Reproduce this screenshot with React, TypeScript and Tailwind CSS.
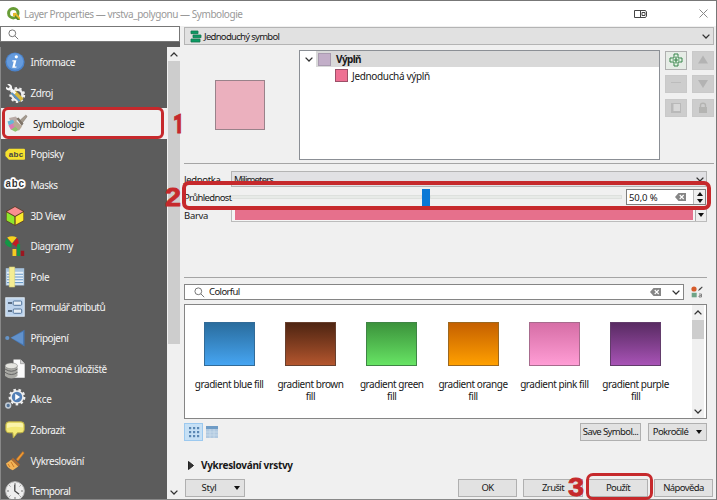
import React from 'react';

type P = { children?: React.ReactNode; className?: string };

const Txt = ({ children, className = '' }: P) => (
  <span className={'whitespace-nowrap leading-none ' + className}>{children}</span>
);

const Chevron = ({ className = '' }: P) => (
  <svg className={'h-[5px] w-[8px] shrink-0 ' + className} viewBox="0 0 8 5" fill="none" stroke="#333" strokeWidth="1.3">
    <path d="M.6.6 4 4 7.4.6" />
  </svg>
);

const Triangle = ({ className = '' }: P) => (
  <svg className={'h-[4px] w-[6px] shrink-0 ' + className} viewBox="0 0 6 4">
    <path d="M0 0h6L3 4z" fill="#111" />
  </svg>
);

const Search = ({ className = '' }: P) => (
  <svg className={'h-[11px] w-[11px] shrink-0 ' + className} viewBox="0 0 11 11" fill="none" stroke="#777" strokeWidth="1">
    <circle cx="4.3" cy="4.3" r="3.4" />
    <path d="m6.8 6.8 3.4 3.4" />
  </svg>
);

const Clear = ({ className = '' }: P) => (
  <svg className={'h-[8px] w-[11px] shrink-0 ' + className} viewBox="0 0 11 8">
    <path d="M3.5 0H11v8H3.5L0 4z" fill="#868686" />
    <path d="m4.7 2 4 4m0-4-4 4" stroke="#fff" strokeWidth="1.1" />
  </svg>
);

const gear = (cx: number, cy: number, r: number, w: number, color: string) => (
  <circle cx={cx} cy={cy} r={r} fill="none" stroke={color} strokeWidth={w} strokeDasharray={`${(r * Math.PI) / 9} ${(r * Math.PI) / 9}`} />
);

const icons: Record<string, React.ReactNode> = {
  info: (
    <>
      <circle cx="10" cy="10" r="9.6" fill="#4b83cb" />
      <circle cx="10" cy="9.5" r="8.3" fill="#659bdd" />
      <circle cx="11.3" cy="4.8" r="1.6" fill="#fff" />
      <path d="M7.4 8.3h4l-1.6 6.1h1.8l-.3 1.3H7.2l1.5-6.1H7.2z" fill="#fff" />
    </>
  ),
  source: (
    <>
      {gear(12.3, 12, 6.3, 3.2, '#eee')}
      <circle cx="12.3" cy="12" r="5.2" fill="none" stroke="#eee" strokeWidth="2.6" />
      <path d="m5.5 10.5 5-3 8 8-4 3.7z" fill="#d8b93b" />
      <path d="m5.5 10.5 2-1.3 8 8.4-1.5 1.3z" fill="#5a91c5" />
      <path d="M2.2 1.3C4.4.3 7.8 2 7 5.3l4.3 4.3-1.8 1.7-4.4-4C2.2 8.2.2 5.7 1.2 3.8l2.2 1.5 1.6-1.5z" fill="#f5f5f5" />
    </>
  ),
  labels: (
    <>
      <path d="M4 4.7h15a1 1 0 0 1 1 1v9a1 1 0 0 1-1 1H4L.4 12V8z" fill="#f6e12e" />
      <text x="3.8" y="12.8" fontSize="8" fontWeight="bold" fontFamily="Liberation Sans" fill="#444" textLength="14.5">abc</text>
    </>
  ),
  masks: (
    <text x="0.6" y="12.4" fontSize="10" fontWeight="bold" fontFamily="Liberation Sans" fill="#333" stroke="#fff" strokeWidth="3.6" strokeLinejoin="round" paintOrder="stroke" textLength="18.5">abc</text>
  ),
  cube: (
    <>
      <path d="m10 .3 9 5v9.8l-9 4.7-9-4.7V5.3z" fill="#5c3a22" />
      <path d="m10 1 8 4.4-8 4.5-8-4.5z" fill="#fa8e91" />
      <path d="m1.6 6.2 7.8 4.5v8L1.6 14.6z" fill="#8de82c" />
      <path d="m18.4 6.2-7.8 4.5v8l7.8-4.1z" fill="#faea2c" />
    </>
  ),
  diagrams: (
    <>
      <path d="M2.2 1.6Q7-1 11.8 1.6L7 7.3z" fill="#f8d21c" />
      <path d="M12 2.1Q15 5 12.2 11L7.2 8z" fill="#c51c20" />
      <path d="M1.4 2.3-.2 6.8Q2 11.4 6.7 11.5L6.4 7.5z" fill="#139745" />
      <path d="M7.5 13h3.8v7H7.5z" fill="#f6ca21" />
      <path d="M12 8.2h3.1V20H12z" fill="#159348" />
      <path d="M15.8 14.7h3.4V20h-3.4z" fill="#9b1620" />
    </>
  ),
  fields: (
    <>
      <path d="M.8 1.2h18.4v17.3H.8z" fill="#a8c5e0" />
      <path d="M1.8 4.8h16.4v12.8H1.8z" fill="#e8f1f8" />
      <path d="M2 7.2h16M2 10h16M2 12.8h16M2 15.6h16" stroke="#6798c7" strokeWidth="1.1" />
      <path d="M4.3 0h5.4v20H4.3z" fill="#f5ed92" stroke="#d4cf78" strokeWidth=".6" />
    </>
  ),
  form: (
    <>
      <rect x=".8" y=".8" width="18.4" height="18.4" fill="#bdd3ec" stroke="#e2edf8" />
      <rect x="8.2" y="4" width="8.5" height="4.3" rx="1" fill="#e5edf5" stroke="#52749b" />
      <rect x="8.2" y="12" width="8.5" height="4.3" rx="1" fill="#e5edf5" stroke="#52749b" />
      <path d="M3 6h4M3 14h4" stroke="#374a5d" strokeWidth="1.4" />
    </>
  ),
  joins: (
    <>
      <circle cx="2.3" cy="10" r="2.1" fill="#6694c7" />
      <path d="m5.5 9.7 14-8v16.7z" fill="#4778b5" />
      <path d="m6 9.7 12-6v12.6z" fill="#6292cc" />
    </>
  ),
  storage: (
    <>
      <path d="M8.5.5h7l4.2 4.2v14.1H8.5z" fill="#fafafa" />
      <path d="M15.5.5v4.2h4.2" fill="#d2d2d2" stroke="#777" strokeWidth=".5" />
      <path d="M0 6.8v10.1q6.5 5 12.5 0V6.8z" fill="#a9a9a4" />
      <ellipse cx="6.3" cy="6.8" rx="6.2" ry="2.9" fill="#e4e4df" stroke="#777" strokeWidth=".5" />
      <path d="M0 10q6.3 4.5 12.5 0M0 13.3q6.3 4.5 12.5 0" fill="none" stroke="#666" />
    </>
  ),
  actions: (
    <>
      {gear(12, 8, 7.2, 2.4, '#eee')}
      <circle cx="12" cy="8" r="6.8" fill="#eee" />
      <circle cx="12" cy="8" r="5.2" fill="#527fb6" />
      <path d="m10.2 4.8 4.9 3.2-4.9 3.2z" fill="#fff" />
      <circle cx="3.2" cy="16.5" r="2.4" fill="#527295" stroke="#c2cbd5" strokeWidth="1.5" />
    </>
  ),
  display: (
    <>
      <path d="M4 1.8h12q3.2 0 3.2 3v5q0 3-3.2 3h-3.6L8.3 18l-.5-5.2H4q-3.2 0-3.2-3v-5q0-3 3.2-3z" fill="#f3e976" stroke="#b9ad45" />
      <path d="M4 3h12q2 0 2 2v2.5Q9 6 2 8V5q0-2 2-2z" fill="#faf4a9" />
    </>
  ),
  rendering: (
    <>
      <path d="m11.3 8.2 6.5-7.6 1.4 1.3-6.2 8z" fill="#f09b35" stroke="#bd6d1f" strokeWidth=".6" />
      <path d="m8 6.7 7 7-1.8 1.8-7-6.7z" fill="#ad6930" />
      <path d="M6.2 8.8 1 12.6q1 4.5 6.8 6.7l5.4-3.8z" fill="#f4b355" />
      <path d="m3 13 2 3m1-5 3 5" stroke="#ca7928" />
    </>
  ),
  temporal: (
    <>
      <circle cx="10" cy="10" r="9.3" fill="#eee" stroke="#c2c2c2" />
      <path d="M10 2v2m0 12v2M2 10h2m12 0h2M4.4 4.4l1 1m9.2 9.2 1 1m0-11.2-1 1m-9.2 9.2-1 1" stroke="#777" />
      <path d="M9.8 3.8V10l4.3 3.2" fill="none" stroke="#444" strokeWidth="1.3" />
    </>
  ),
  brush: (
    <>
      <path d="m2 4 7-1.5L11 6 4 9z" fill="#b9aaa6" />
      <path d="m.5 7.5 5-1.8 2.7 3L2 12z" fill="#67b7d6" />
      <path d="m1.5 11.5 6-2.8 2.3 3.6L4 16z" fill="#de77b4" />
      <path d="m4 15.5 5.5-3.7 3 3.6-4.2 2.4z" fill="#90c26e" />
      <path d="m8 5.7 7 6.7-3.2 4.4q-2-3.2-6-5.8z" fill="#b9a894" />
      <path d="m9.5 4.5 2-1 5 6-1.8 2.6z" fill="#7f7468" />
      <path d="m13.2 6.2 5.5-5q1.3.3 1.2 1.6l-4.5 6z" fill="#a59b8f" stroke="#70675d" strokeWidth=".5" />
    </>
  ),
};

const items: [string, string, string][] = [
  ['info', 'Informace', 'tracking-[-0.45px]'],
  ['source', 'Zdroj', 'tracking-[-0.4px]'],
  ['brush', 'Symbologie', 'tracking-[-0.4px]'],
  ['labels', 'Popisky', 'tracking-[-0.4px]'],
  ['masks', 'Masks', 'tracking-[-0.5px]'],
  ['cube', '3D View', 'tracking-[-0.4px]'],
  ['diagrams', 'Diagramy', 'tracking-[-0.4px]'],
  ['fields', 'Pole', 'tracking-[-0.4px]'],
  ['form', 'Formulář atributů', 'tracking-[-0.55px]'],
  ['joins', 'Připojení', 'tracking-[-0.45px]'],
  ['storage', 'Pomocné úložiště', 'tracking-[-0.4px]'],
  ['actions', 'Akce', 'tracking-[-0.3px]'],
  ['display', 'Zobrazit', 'tracking-[-0.5px]'],
  ['rendering', 'Vykreslování', 'tracking-[-0.45px]'],
  ['temporal', 'Temporal', 'tracking-[-0.55px]'],
];

const Sidebar = () => (
  <aside className="flex w-[180px] shrink-0 flex-col">
    <div className="flex h-[16px] shrink-0 items-center border border-[#777] bg-white pl-[7px]">
      <Search />
    </div>
    <div className="flex min-h-0 flex-1 bg-[#5c5c5c] pt-[5px]">
      <nav className="w-[167px] overflow-hidden border-l border-[#888]">
        {items.map(([icon, label, track]) => {
          const on = icon === 'brush';
          return (
            <div key={icon} className={'flex h-[30.65px] items-center ' + (on ? 'bg-[#f0f0f0] pl-[6px] text-[#222]' : 'pl-[3.5px] text-[#f4f4f4]')}>
              <svg className="h-[20px] w-[20px] shrink-0 overflow-visible" viewBox="0 0 20 20">{icons[icon]}</svg>
              <Txt className={'ml-[6px] ' + track}>{label}</Txt>
            </div>
          );
        })}
      </nav>
      <div className="flex w-[13px] flex-col items-center bg-[#f0f0f0]">
        <div className="flex h-[14px] shrink-0 items-center"><Chevron className="rotate-180" /></div>
        <div className="h-[283px] w-[12px] shrink-0 bg-[#cdcdcd]" />
        <div className="flex flex-1 items-end pb-[4px]"><Chevron /></div>
      </div>
    </div>
  </aside>
);

const fills = [
  ['gradient blue fill', 'from-[#2a6d9e] to-[#46a5f2] border-[#326b98]'],
  ['gradient brown fill', 'from-[#4f2512] to-[#b4562e] border-[#68402e]'],
  ['gradient green fill', 'from-[#3c933c] to-[#67e464] border-[#3f8545]'],
  ['gradient orange fill', 'from-[#c56000] to-[#ffa000] border-[#9c681f]'],
  ['gradient pink fill', 'from-[#d66ea6] to-[#ff9dd5] border-[#a76b8d]'],
  ['gradient purple fill', 'from-[#592b63] to-[#a853b6] border-[#623c6b]'],
];

const Button = ({ children, className = '' }: P) => (
  <div className={'flex h-[18px] shrink-0 items-center justify-center border border-[#b0b0b0] bg-[#e2e2e2] text-[9.5px] tracking-[-0.6px] ' + className}>{children}</div>
);

const ToolIcon = ({ children, className = 'border-[#c9c9c9] bg-[#cdcdcd]' }: P) => (
  <div className={'flex h-[18.5px] w-[22px] items-center justify-center border ' + className}>
    <svg className="h-[14px] w-[14px]" viewBox="0 0 14 14">{children}</svg>
  </div>
);

const SymbolTree = () => (
  <div className="ml-[34px] h-[110px] w-[361px] border border-[#8b8f95] bg-white">
    <div className="flex h-[16px] items-center pl-[5px]">
      <Chevron />
      <div className="ml-[3px] flex h-full flex-1 items-center bg-[#d9d9d9] pl-[2px]">
        <div className="h-[13px] w-[13px] border border-[#a99bb0] bg-[#c2aec8]" />
        <Txt className="ml-[5px] font-bold tracking-[-0.6px]">Výplň</Txt>
      </div>
    </div>
    <div className="flex h-[17px] items-center pl-[35px]">
      <div className="h-[13px] w-[13px] border border-[#9c5068] bg-[#ee7093]" />
      <Txt className="ml-[4px] tracking-[-0.35px]">Jednoduchá výplň</Txt>
    </div>
  </div>
);

const Main = () => (
  <main className="ml-[4px] flex w-[530px] shrink-0 flex-col">
    <div className="mt-px flex h-[18px] shrink-0 items-center border border-[#b4b4b4] bg-[#e1e1e1] pr-[3px]">
      <svg className="ml-[5px] h-[13px] w-[12px]" viewBox="0 0 12 13">
        <path d="M1 1h7v2.7H1zM3 5h8v2.7H3zM1 9h9v3H1z" fill="#0a9b63" stroke="#14734e" strokeWidth=".8" />
      </svg>
      <Txt className="ml-[2px] flex-1 pt-px text-[9.5px] tracking-[-0.7px]">Jednoduchý symbol</Txt>
      <Chevron />
    </div>

    <div className="flex h-[119px] shrink-0 border-b border-[#a5a5a5] pt-[5px]">
      <div className="ml-[31px] mt-[30px] h-[50px] w-[50px] border border-[#99828a] bg-[#ebb0be]" />
      <SymbolTree />
      <div className="ml-[5px] mt-px grid h-[66px] grid-cols-[22px_22px] content-between gap-x-[5px]">
        <ToolIcon className="border-[#b0b0b0] bg-[#e6ece6]">
          <path d="M5 1h4v4h4v4H9v4H5V9H1V5h4z" fill="#e5f3e5" stroke="#37834a" />
          <path d="M7 3.5v7M3.5 7h7" stroke="#37834a" strokeWidth="1.2" />
        </ToolIcon>
        <ToolIcon><path d="m7 2.5 5 8H2z" fill="#b3b3b3" /></ToolIcon>
        <ToolIcon><path d="M2 5.5h10" stroke="#bcbcbc" /></ToolIcon>
        <ToolIcon><path d="m7 11 5-8H2z" fill="#b3b3b3" /></ToolIcon>
        <ToolIcon>
          <path d="M2 2h10v10H2z" fill="#b9b9b9" />
          <path d="M4.5 3H11v7H4.5z" fill="#d8d8d8" />
        </ToolIcon>
        <ToolIcon>
          <path d="M3 6h8v6H3z" fill="#b4b4b2" />
          <path d="M4.5 6V4.3q0-2 2.5-2t2.5 2V6" fill="none" stroke="#b4b4b2" strokeWidth="1.4" />
        </ToolIcon>
      </div>
    </div>

    <section className="flex h-[114px] w-[523px] shrink-0 flex-col border-b border-[#a5a5a5] pt-[7px] text-[9.5px]">
      <div className="flex h-[16px] shrink-0 items-center">
        <Txt className="w-[47px] pt-px tracking-[-0.35px]">Jednotka</Txt>
        <div className="flex h-[16px] flex-1 items-center justify-between border border-[#b4b4b4] bg-[#e1e1e4] pl-[2px] pr-[2px]">
          <Txt className="pt-px tracking-[-0.85px]">Milimeters</Txt>
          <Chevron />
        </div>
      </div>
      <div className="flex h-[20px] shrink-0 items-center">
        <Txt className="w-[47px] pt-px tracking-[-0.65px]">Průhlednost</Txt>
        <div className="flex h-[18px] w-[391px] items-center">
          <div className="h-[4px] w-[191px] border border-[#dde0dd] bg-[#e7eae7]" />
          <div className="h-[17px] w-[8px] bg-[#0a78d6]" />
          <div className="h-[4px] flex-1 border border-[#dde0dd] bg-[#e7eae7]" />
        </div>
        <div className="ml-[4px] flex h-[16px] w-[80px] items-center border border-[#7f7f7f] bg-white pl-[2px]">
          <Txt className="flex-1 pt-px tracking-[-0.1px]">50,0 %</Txt>
          <Clear className="mr-[7px]" />
          <div className="flex h-full w-[12px] flex-col items-center justify-center gap-[3px] border-l border-[#bbb] bg-[#efefef]">
            <Triangle className="rotate-180" />
            <Triangle />
          </div>
        </div>
      </div>
      <div className="flex h-[15px] shrink-0 items-center">
        <Txt className="w-[47px] pt-[2px] tracking-[-0.3px]">Barva</Txt>
        <div className="flex h-[15px] flex-1 border border-[#bcbcbc] bg-[#f5f5f5] pl-[3px]">
          <div className="h-[12px] w-[458px] bg-[#e6708c]" />
          <div className="ml-[2px] flex flex-1 items-center justify-center border-l border-[#aaa] bg-[#eee]"><Triangle /></div>
        </div>
      </div>
    </section>

    <div className="mt-[6px] flex h-[16px] shrink-0 items-center">
      <div className="flex h-[16px] w-[500px] items-center border border-[#858585] bg-white pl-[9px] pr-[3px]">
        <Search />
        <Txt className="ml-[4px] flex-1 text-[9.5px] tracking-[-0.6px]">Colorful</Txt>
        <Clear className="mr-[11px]" />
        <Chevron />
      </div>
      <svg className="ml-[7px] h-[12px] w-[12px]" viewBox="0 0 12 12">
        <circle cx="3" cy="3" r="2.6" fill="#d65c2b" />
        <path d="m7 5 1-2 3-2.5.7.7L9 4z" fill="#444" />
        <path d="M.7 6.8h5v4.5h-5z" fill="#6fa487" />
        <path d="M8 8h2.5v3H8q-1-1.5 2-1.5" fill="none" stroke="#777" strokeWidth=".9" />
      </svg>
    </div>

    <div className="mt-[4px] flex h-[115px] w-[523px] shrink-0 border border-[#858585] bg-white">
      <div className="flex flex-1 pl-[3.5px] pt-[17px]">
        {fills.map(([name, colors]) => (
          <div key={name} className="flex w-[81.3px] shrink-0 flex-col items-center">
            <div className={'h-[44px] w-[51px] border bg-linear-to-b ' + colors} />
            <p className="mt-[12px] w-[74px] text-center text-[10px] leading-[12px] tracking-[-0.45px]">{name}</p>
          </div>
        ))}
      </div>
      <div className="mr-[2px] flex w-[12px] shrink-0 flex-col items-center bg-[#f0f0f0]">
        <div className="flex h-[15px] items-center"><Chevron className="rotate-180" /></div>
        <div className="h-[19px] w-[12px] bg-[#cdcdcd]" />
        <div className="flex flex-1 items-end pb-[4px]"><Chevron /></div>
      </div>
    </div>

    <div className="mt-[4px] flex h-[18px] w-[523px] shrink-0 items-center">
      <div className="flex h-[18px] w-[19px] items-center justify-center border border-[#9cc9ef] bg-[#c6e0f5]">
        <svg className="h-[12px] w-[12px]" viewBox="0 0 12 12" fill="#5a87b3">
          {[1, 5, 9].flatMap((y) => [1, 5, 9].map((x) => <rect key={`${x}-${y}`} x={x} y={y} width="2.2" height="2.2" />))}
        </svg>
      </div>
      <svg className="ml-[3px] h-[12px] w-[12px]" viewBox="0 0 12 12">
        <path d="M0 0h12v12H0z" fill="#b1c9e0" />
        <path d="M0 0h12v3H0z" fill="#6f9cc6" />
        <path d="M4 3v9M8 3v9M0 6h12M0 9h12" stroke="#d0dfed" strokeWidth=".7" />
      </svg>
      <Button className="ml-auto w-[61px]"><Txt>Save Symbol...</Txt></Button>
      <Button className="ml-[7px] w-[59px] gap-[8px]"><Txt>Pokročilé</Txt><Triangle /></Button>
    </div>

    <div className="mt-[18px] flex h-[12px] shrink-0 items-center">
      <svg className="ml-[4px] h-[9px] w-[6px]" viewBox="0 0 6 9"><path d="M.5.5v8l5-4z" fill="#333" stroke="#222" /></svg>
      <Txt className="ml-[7px] font-bold tracking-[-0.3px]">Vykreslování vrstvy</Txt>
    </div>

    <div className="mt-[8px] flex h-[18px] shrink-0">
      <Button className="ml-px w-[60px] gap-[17px] pl-[11px]"><Txt className="tracking-[-0.2px]">Styl</Txt><Triangle /></Button>
      <Button className="ml-[213px] w-[59px]"><Txt>OK</Txt></Button>
      <Button className="ml-[6px] w-[60px]"><Txt>Zrušit</Txt></Button>
      <Button className="ml-[5px] w-[60px]"><Txt>Použít</Txt></Button>
      <Button className="ml-[6px] w-[59px]"><Txt>Nápověda</Txt></Button>
    </div>
  </main>
);

const Digit = ({ children, className = '' }: P) => (
  <span className={'absolute origin-left text-[25px] leading-none text-[#c6292c] [-webkit-text-stroke:0.8px_#c6292c] ' + className}>{children}</span>
);

export default function App() {
  return (
    <div className='relative flex h-[500px] w-[717px] flex-col overflow-hidden border-r border-t border-[#777] bg-[#f0f0f0] font-["Noto_Sans","Open_Sans",sans-serif] text-[10px] text-[#181818]'>
      <header className="flex h-[25px] shrink-0 items-center bg-white">
        <svg className="ml-[7px] h-[13px] w-[14px]" viewBox="0 0 14 13">
          <circle cx="6.3" cy="6.2" r="4.7" fill="none" stroke="#689d36" strokeWidth="3" />
          <path d="m6 6 2.7-.2L13 10.3v2.4h-2.6L6 8.2z" fill="#e7b92b" />
          <path d="m8 8 5 5h-2.6L8 10.4z" fill="#568c2d" />
        </svg>
        <Txt className="ml-[3px] flex-1 tracking-[-0.45px] text-[#999]">Layer Properties — vrstva_polygonu — Symbologie</Txt>
        <svg className="mr-[52px] h-[8px] w-[13px]" viewBox="0 0 13 8" fill="none" stroke="#444">
          <path d="M.5.5h11l1 1.5v4l-1 1.5H.5zM6.5.5v7M8 2.5h3v3H8z" />
        </svg>
        <svg className="mr-[8px] h-[9px] w-[9px]" viewBox="0 0 9 9" stroke="#888"><path d="m.5.5 8 8m0-8-8 8" /></svg>
      </header>
      <div className="flex min-h-0 flex-1 border-b border-[#888]">
        <Sidebar />
        <Main />
      </div>

      <Digit className="left-[173px] top-[111px] scale-x-[0.75] font-[Roboto,sans-serif] font-black">1</Digit>
      <Digit className="left-[165px] top-[184px] scale-x-[1.15] font-['Liberation_Sans',sans-serif] font-bold">2</Digit>
      <Digit className="left-[568px] top-[474px] scale-x-[1.15] font-['Liberation_Sans',sans-serif] font-bold">3</Digit>
      <div className="absolute left-[2px] top-[106px] h-[32px] w-[162px] rounded-[6px] border-[3.5px] border-[#c6292c]" />
      <div className="absolute left-[182px] top-[180px] h-[29px] w-[529px] rounded-[7px] border-[4px] border-[#c6292c]" />
      <div className="absolute left-[586px] top-[472px] h-[27px] w-[67px] rounded-[7px] border-[3.5px] border-[#c6292c]" />
    </div>
  );
}
